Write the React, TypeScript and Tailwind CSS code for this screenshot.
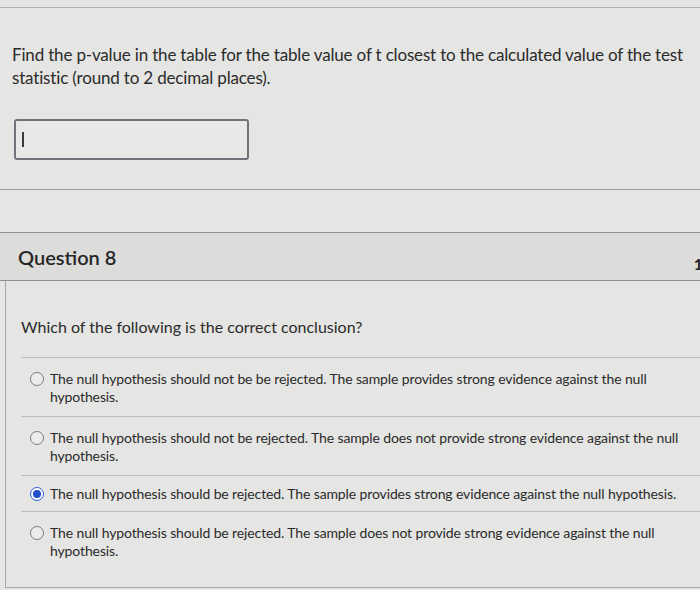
import React from 'react';

const options = [
  { text: 'The null hypothesis should not be be rejected. The sample provides strong evidence against the null hypothesis.', checked: false },
  { text: 'The null hypothesis should not be rejected. The sample does not provide strong evidence against the null hypothesis.', checked: false },
  { text: 'The null hypothesis should be rejected. The sample provides strong evidence against the null hypothesis.', checked: true },
  { text: 'The null hypothesis should be rejected. The sample does not provide strong evidence against the null hypothesis.', checked: false },
];

function Radio({ checked }: { checked: boolean }) {
  if (checked) {
    return (
      <span className="mt-[2px] flex h-[14px] w-[14px] shrink-0 items-center justify-center rounded-full border-[1.5px] border-[#2a5bd7] bg-white">
        <span className="h-[8px] w-[8px] rounded-full bg-[#1f4fc9]" />
      </span>
    );
  }
  return <span className="mt-[2px] h-[14px] w-[14px] shrink-0 rounded-full border-[1.5px] border-[#7d7d7d] bg-[#ececea]" />;
}

export default function App() {
  return (
    <div className="h-[590px] w-[700px] overflow-hidden bg-[#e5e5e3] text-[#2b2b2b]" style={{ fontFamily: 'Lato, "Open Sans", sans-serif' }}>
      <div className="pt-[7px]">
        <div className="h-px bg-[#b4b4b2]" />
      </div>

      <div className="pl-[12px] pr-2 pt-[35px] text-[17px] leading-[23px] tracking-[-0.17px]">
        Find the p-value in the table for the table value of t closest to the calculated value of the test statistic (round to 2 decimal places).
      </div>

      <div className="ml-[14px] mt-[30px] flex h-[41px] w-[235px] items-center rounded-[3px] border-2 border-[#6f747c] bg-[#e8e8e6] pl-[6px]">
        <span className="h-[15px] w-[2px] bg-[#3a3a3a]" />
      </div>

      <div className="mt-[29px] h-px bg-[#9c9c9a]" />

      <div className="mt-[42px] border-y border-[#8f8f8d] bg-[#dcdcda]">
        <div className="flex h-[47px] items-center justify-between pl-[18px] pr-0">
          <span className="text-[20px] font-semibold text-[#262626]">Question 8</span>
          <span className="mt-[14px] mr-[-3px] text-[16px] font-bold text-[#262626]">1</span>
        </div>
      </div>

      <div className="ml-[5px] h-[307px] border-b border-l border-[#a6a6a4]">
        <div className="pl-[15px] pt-[36px] text-[16px] leading-[20px]">Which of the following is the correct conclusion?</div>

        <div className="mt-[20px] ml-[15px]">
          {options.map((o, i) => (
            <div key={i} className="border-t border-[#bdbdbb]">
              <div className={`flex gap-[6px] pl-[9px] pr-1 ${o.checked ? 'pt-[9px] pb-[8px]' : 'pt-[12px] pb-[10px]'}`}>
                <Radio checked={o.checked} />
                <div className="text-[14px] leading-[18px] tracking-[-0.12px] text-[#2b2b2b]">{o.text}</div>
              </div>
            </div>
          ))}
        </div>
      </div>
    </div>
  );
}
